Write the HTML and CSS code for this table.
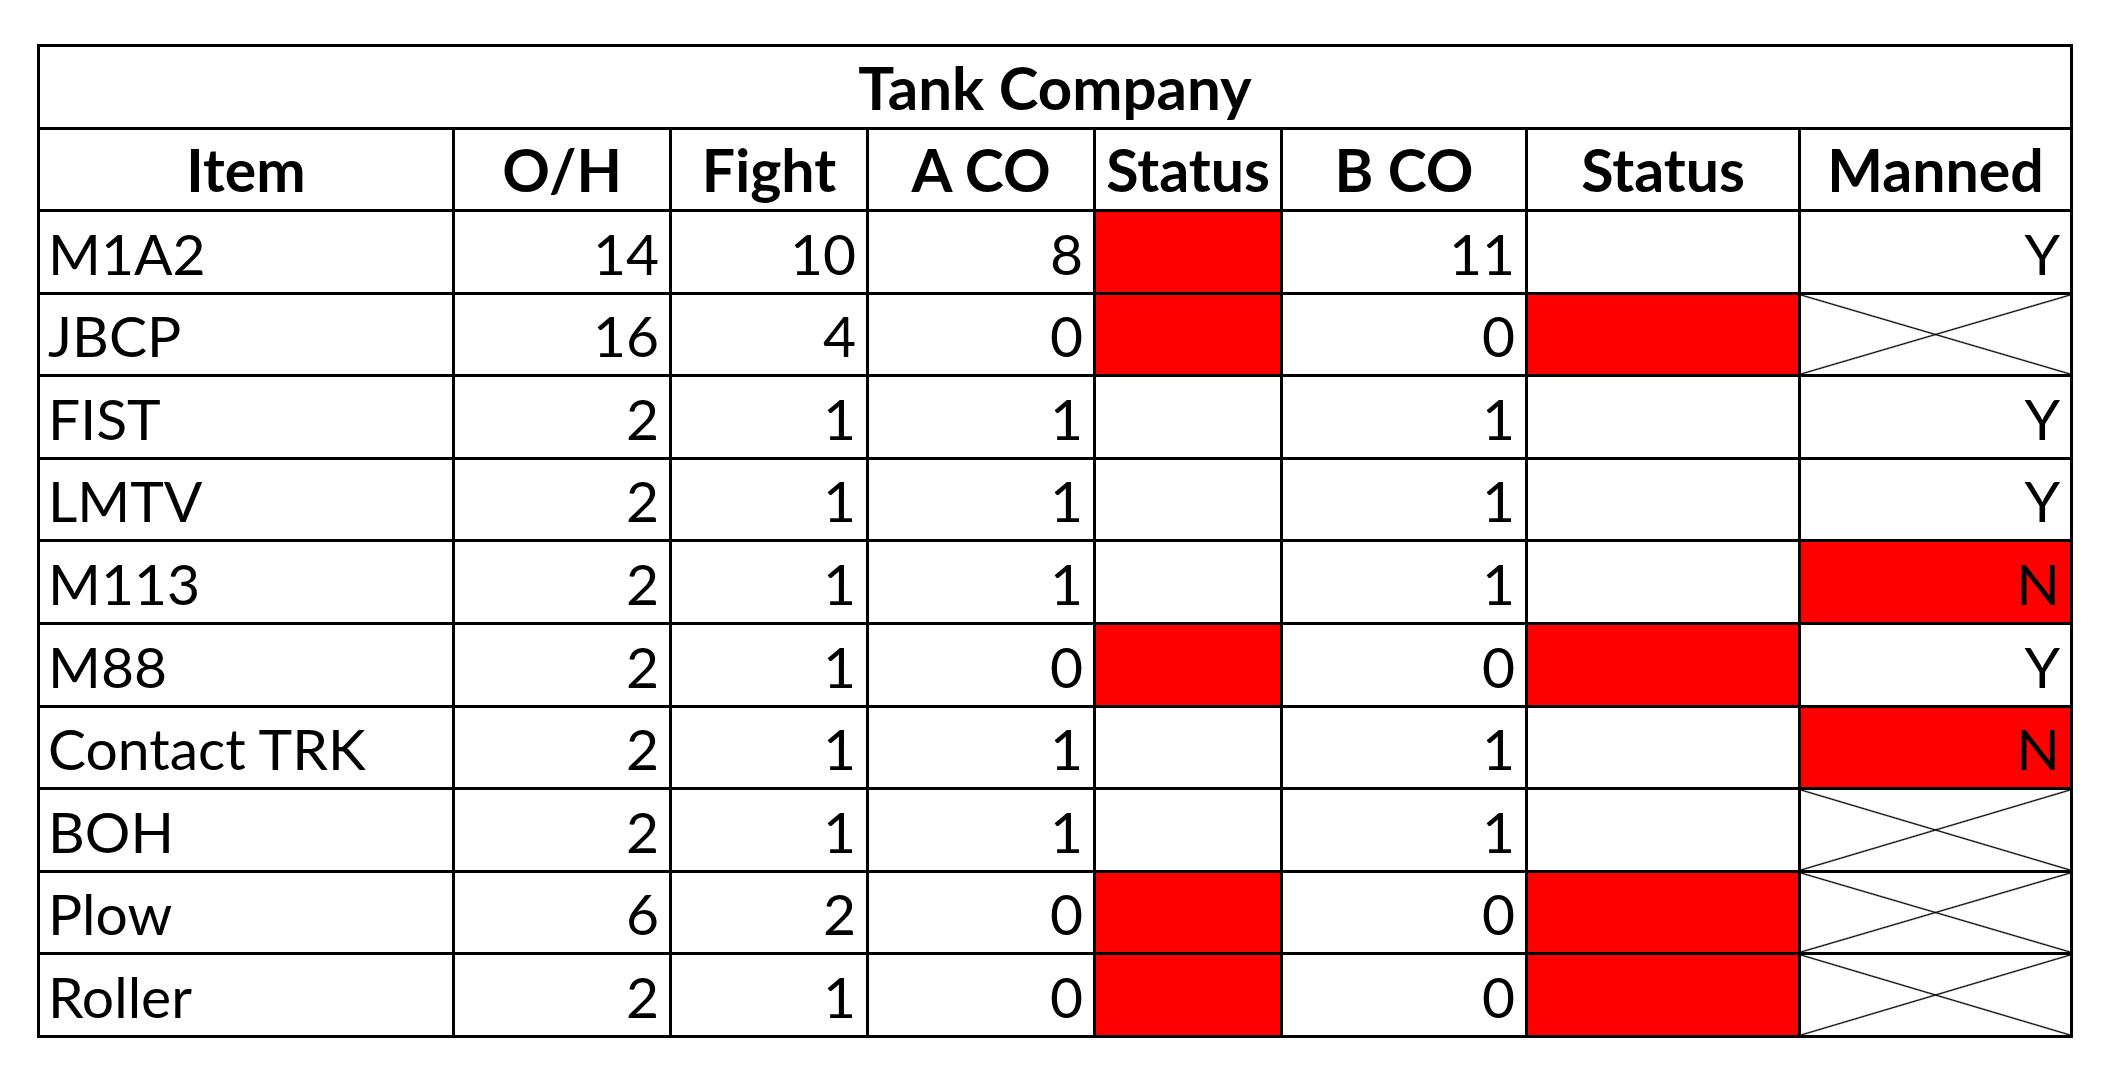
FILE: index.html
```html
<!DOCTYPE html>
<html lang="en">
<head>
<meta charset="utf-8">
<title>Tank Company</title>
<link rel="stylesheet" href="styles.css">
</head>
<body>
<div class="sheet" role="table" aria-label="Tank Company">
  <div class="cell title" role="columnheader">Tank Company</div>

  <div class="cell head">Item</div>
  <div class="cell head">O/H</div>
  <div class="cell head">Fight</div>
  <div class="cell head">A CO</div>
  <div class="cell head">Status</div>
  <div class="cell head">B CO</div>
  <div class="cell head">Status</div>
  <div class="cell head">Manned</div>

  <div class="cell name">M1A2</div><div class="cell num">14</div><div class="cell num">10</div><div class="cell num">8</div><div class="cell red"></div><div class="cell num">11</div><div class="cell"></div><div class="cell num">Y</div>

  <div class="cell name">JBCP</div><div class="cell num">16</div><div class="cell num">4</div><div class="cell num">0</div><div class="cell red"></div><div class="cell num">0</div><div class="cell red"></div><div class="cell cross"></div>

  <div class="cell name">FIST</div><div class="cell num">2</div><div class="cell num">1</div><div class="cell num">1</div><div class="cell"></div><div class="cell num">1</div><div class="cell"></div><div class="cell num">Y</div>

  <div class="cell name">LMTV</div><div class="cell num">2</div><div class="cell num">1</div><div class="cell num">1</div><div class="cell"></div><div class="cell num">1</div><div class="cell"></div><div class="cell num">Y</div>

  <div class="cell name">M113</div><div class="cell num">2</div><div class="cell num">1</div><div class="cell num">1</div><div class="cell"></div><div class="cell num">1</div><div class="cell"></div><div class="cell num red">N</div>

  <div class="cell name">M88</div><div class="cell num">2</div><div class="cell num">1</div><div class="cell num">0</div><div class="cell red"></div><div class="cell num">0</div><div class="cell red"></div><div class="cell num">Y</div>

  <div class="cell name">Contact TRK</div><div class="cell num">2</div><div class="cell num">1</div><div class="cell num">1</div><div class="cell"></div><div class="cell num">1</div><div class="cell"></div><div class="cell num red">N</div>

  <div class="cell name">BOH</div><div class="cell num">2</div><div class="cell num">1</div><div class="cell num">1</div><div class="cell"></div><div class="cell num">1</div><div class="cell"></div><div class="cell cross"></div>

  <div class="cell name">Plow</div><div class="cell num">6</div><div class="cell num">2</div><div class="cell num">0</div><div class="cell red"></div><div class="cell num">0</div><div class="cell red"></div><div class="cell cross"></div>

  <div class="cell name">Roller</div><div class="cell num">2</div><div class="cell num">1</div><div class="cell num">0</div><div class="cell red"></div><div class="cell num">0</div><div class="cell red"></div><div class="cell cross"></div>
</div>
</body>
</html>
```

FILE: styles.css
```css
html, body {
  margin: 0;
  padding: 0;
  background: #ffffff;
}

body {
  font-family: Lato, "Liberation Sans", sans-serif;
  color: #000000;
}

.sheet {
  display: grid;
  grid-template-columns: 415px 217px 197px 227px 187px 245px 273px 272px;
  grid-template-rows: 83px 82px repeat(10, 82.6px);
  width: max-content;
  margin: 44px 0 0 37px;
  border-top: 3px solid #000;
  border-left: 3px solid #000;
}

.cell {
  box-sizing: border-box;
  border-right: 3px solid #000;
  border-bottom: 3px solid #000;
  display: flex;
  align-items: flex-end;
  line-height: 1;
  font-size: 57px;
  padding: 0 10px 10px 8px;
  white-space: nowrap;
  overflow: hidden;
}

.title {
  grid-column: 1 / -1;
  justify-content: center;
  font-weight: 700;
  font-size: 60px;
  padding: 0 0 10px 0;
}

.head {
  justify-content: center;
  font-weight: 700;
  font-size: 59px;
  padding: 0 0 10px 0;
}

.name {
  justify-content: flex-start;
}

.num {
  justify-content: flex-end;
}

.red {
  background: #ff0000;
}

.cross {
  background:
    linear-gradient(to top right, transparent calc(50% - 1.3px), #000 50%, transparent calc(50% + 1.3px)),
    linear-gradient(to bottom right, transparent calc(50% - 1.3px), #000 50%, transparent calc(50% + 1.3px)),
    #ffffff;
}
```
